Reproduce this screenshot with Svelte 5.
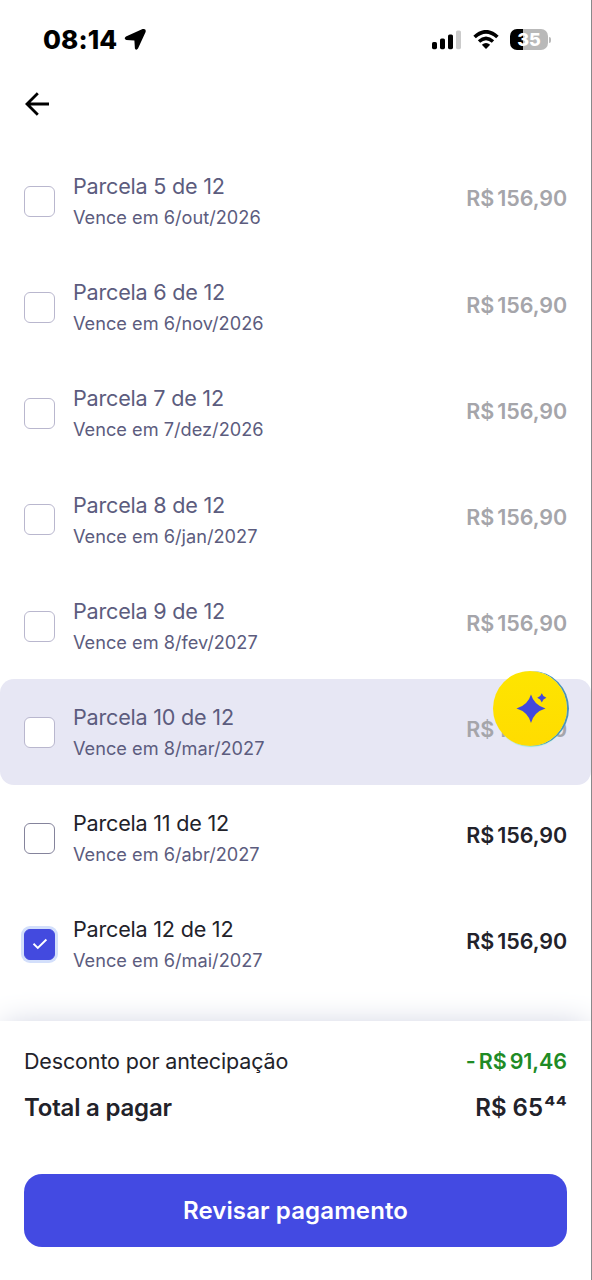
<script>
  const installments = [
    { n: 5, due: '6/out/2026' },
    { n: 6, due: '6/nov/2026' },
    { n: 7, due: '7/dez/2026' },
    { n: 8, due: '6/jan/2027' },
    { n: 9, due: '8/fev/2027' },
    { n: 10, due: '8/mar/2027', pressed: true },
    { n: 11, due: '6/abr/2027', enabled: true },
    { n: 12, due: '6/mai/2027', enabled: true, checked: true },
  ];
</script>

<div class="screen">
  <header class="status">
    <div class="clock">
      <span class="time">08:14</span>
      <svg width="23" height="23" viewBox="0 0 23 23">
        <path d="M2 8.6 18.6 1.1Q22.4 .2 21.6 4L14 20.6Q12.3 23 10.9 20.4L10.4 12.6 2.4 12.1Q-.8 10.6 2 8.6Z" fill="#000" />
      </svg>
    </div>
    <div class="indicators">
      <svg width="30" height="20" viewBox="0 0 30 20">
        <rect x="0" y="12" width="5" height="7.2" rx="1.6" />
        <rect x="8" y="8.6" width="5" height="10.6" rx="1.6" />
        <rect x="16" y="4.6" width="5" height="14.6" rx="1.6" />
        <rect x="24" y="0.6" width="5" height="18.6" rx="1.6" fill="#cbcbcb" />
      </svg>
      <svg class="wifi" width="26" height="20" viewBox="0 0 26 20">
        <path d="M1.6 7Q13-3.4 24.4 7" fill="none" stroke="#000" stroke-width="3.7" />
        <path d="M6 11.5Q13 5.3 20 11.5" fill="none" stroke="#000" stroke-width="3.5" />
        <path d="M8.8 14.7Q13 11.4 17.2 14.7L13 19Z" />
      </svg>
      <div class="battery">
        <span class="level">35</span>
        <i></i>
      </div>
    </div>
  </header>

  <nav>
    <svg width="25" height="24" viewBox="0 0 25 24" fill="none" stroke="#000" stroke-width="2.8">
      <path d="M24 12H3M12.8 1.2 2 12l10.8 10.8" />
    </svg>
  </nav>

  <main>
    {#each installments as item}
      <div class="row" class:pressed={item.pressed} class:enabled={item.enabled}>
        <span class="box" class:checked={item.checked}>
          {#if item.checked}
            <svg width="16" height="12" viewBox="0 0 16 12" fill="none" stroke="#fff" stroke-width="1.9">
              <path d="M1.5 5.8 5.8 10 14.4 1.5" />
            </svg>
          {/if}
        </span>
        <div class="info">
          <span class="title">Parcela {item.n} de 12</span>
          <span class="due">Vence em {item.due}</span>
        </div>
        <span class="price"><span>R$</span><span>156,90</span></span>
        {#if item.pressed}
          <div class="assistant">
            <svg width="32" height="32" viewBox="0 0 32 32" fill="#4349dc">
              <path d="M15 3.5Q18.1 14.2 29.5 17.5 18.1 20.8 15 32 11.9 20.8 .5 17.5 11.9 14.2 15 3.5Z" />
              <path d="M25.8 2.2Q26.9 5.7 30.4 6.8 26.9 7.9 25.8 11.4 24.7 7.9 21.2 6.8 24.7 5.7 25.8 2.2Z" />
            </svg>
          </div>
        {/if}
      </div>
    {/each}
  </main>

  <footer>
    <div class="line discount">
      <span class="caption">Desconto por antecipação</span>
      <span class="price green"><span>-</span><span>R$</span><span>91,46</span></span>
    </div>
    <div class="line total">
      <span class="caption">Total a pagar</span>
      <span class="sum">R$ 65<span class="cents">⁴⁴</span></span>
    </div>
    <button>Revisar pagamento</button>
  </footer>
</div>

<style>
  :global(body) { margin: 0; background: #fff; }
  .screen {
    box-sizing: border-box;
    width: 592px;
    height: 1280px;
    border-right: 1px solid #89898b;
    background: #fff;
    font-family: Inter, sans-serif;
    color: #22222a;
    display: flex;
    flex-direction: column;
    overflow: hidden;
  }
  .status {
    height: 79px;
    padding: 0 40px 0 43px;
    display: flex;
    align-items: center;
    justify-content: space-between;
    flex: none;
  }
  .clock { display: flex; align-items: center; gap: 7px; color: #000; }
  .time { font-size: 26px; font-weight: 800; line-height: 32px; letter-spacing: 0.1px; }
  .indicators { display: flex; align-items: center; }
  .wifi { margin: 0 11px 0 11px; }
  .battery { display: flex; align-items: center; gap: 1px; }
  .level {
    width: 38px;
    height: 21px;
    border-radius: 7px;
    background: linear-gradient(90deg, #000 13px, #b9b9b9 13px);
    color: #fff;
    font-size: 18px;
    font-weight: 800;
    line-height: 21px;
    text-align: center;
  }
  .battery i { width: 2px; height: 6px; border-radius: 0 2px 2px 0; background: #b9b9b9; }
  nav { height: 69.4px; flex: none; padding: 13px 25px 0; box-sizing: border-box; }
  nav svg { display: block; }
  main { flex: none; height: 873px; }
  .row {
    position: relative;
    box-sizing: border-box;
    height: 106.15px;
    padding: 0 24px;
    border-radius: 14px;
    display: flex;
    align-items: center;
    color: #5c5c7e;
  }
  .pressed { background: #e7e7f4; }
  .box {
    box-sizing: border-box;
    width: 31px;
    height: 31px;
    border: 1.5px solid #b9b7ce;
    border-radius: 6px;
    background: #fff;
    display: flex;
    align-items: center;
    justify-content: center;
  }
  .enabled .box { border-color: #85849c; }
  .enabled .box.checked { background: #434adf; border-color: #434adf; box-shadow: 0 0 0 3px #d3dffb; }
  .info { display: flex; flex-direction: column; margin-left: 18px; flex: 1; padding-bottom: 0.6px; }
  .title { font-size: 21.6px; line-height: 32px; letter-spacing: -0.22px; }
  .due { font-size: 18.2px; line-height: 30px; }
  .enabled .title { color: #22222a; }
  .price {
    display: flex;
    gap: 3px;
    font-size: 21.5px;
    line-height: 30px;
    font-weight: 600;
    letter-spacing: -0.08px;
    color: #a5a5aa;
  }
  .row .price { margin-bottom: 6px; }
  .enabled .price { color: #22222a; }
  .assistant {
    position: absolute;
    left: 493px;
    top: -8px;
    box-sizing: border-box;
    width: 74px;
    height: 75px;
    padding: 0 0 4px 3px;
    border-radius: 50%;
    background: linear-gradient(180deg, #fee500, #ffdc00);
    box-shadow: 2px 0 0 #4b93b8, 1px 1px 1px #8feaca;
    display: flex;
    align-items: center;
    justify-content: center;
  }
  footer {
    flex: 1;
    padding: 24px 24px 0;
    background: #fff;
    position: relative;
    box-shadow: 0 0 30px -4px #c9cddd;
  }
  .line { display: flex; justify-content: space-between; align-items: center; }
  .discount { height: 32px; font-size: 21.5px; }
  .discount .caption { letter-spacing: -0.15px; }
  .price.green { color: #208b25; }
  .total { height: 36px; margin-top: 12px; font-size: 24px; font-weight: 600; }
  .total .caption { letter-spacing: -0.2px; }
  .sum { display: flex; }
  .cents { margin-left: 1px; }
  button {
    display: block;
    width: 543px;
    height: 73px;
    margin: 48.5px 0 0;
    padding: 0;
    border: 0;
    border-radius: 18px;
    background: #434ae2;
    color: #fff;
    font: 600 24px Inter, sans-serif;
    letter-spacing: 0.12px;
  }
</style>
